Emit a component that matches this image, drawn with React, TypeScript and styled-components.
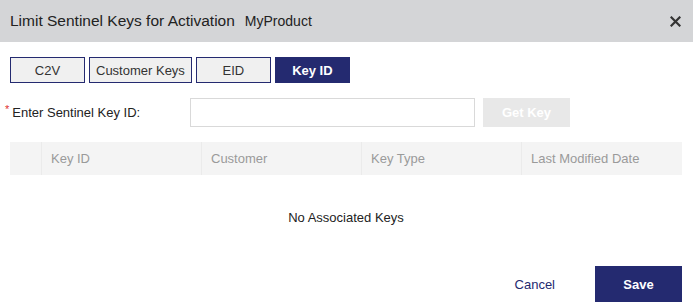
import { useState } from "react";
import styled, { createGlobalStyle } from "styled-components";

const NAVY = "#242a70";

const GlobalStyle = createGlobalStyle`
  html, body {
    margin: 0;
    padding: 0;
    background: #ffffff;
    font-family: "Liberation Sans", Arial, sans-serif;
  }
`;

const TABS = ["C2V", "Customer Keys", "EID", "Key ID"];
const COLUMNS = ["Key ID", "Customer", "Key Type", "Last Modified Date"];

const App = () => {
  const [tab, setTab] = useState("Key ID");
  const [keyId, setKeyId] = useState("");

  return (
    <Dialog>
      <GlobalStyle />
      <Header>
        <Title>Limit Sentinel Keys for Activation</Title>
        <Product>MyProduct</Product>
        <Close aria-label="Close">
          <svg width="11" height="11" viewBox="0 0 11 11">
            <path
              d="M1.5 1.5 L9.5 9.5 M9.5 1.5 L1.5 9.5"
              stroke="#333"
              strokeWidth="2.2"
              strokeLinecap="square"
            />
          </svg>
        </Close>
      </Header>

      <Body>
        <Tabs>
          {TABS.map((t) => (
            <Tab key={t} $active={t === tab} onClick={() => setTab(t)}>
              {t}
            </Tab>
          ))}
        </Tabs>

        <FieldRow>
          <Label>
            <Required>*</Required>Enter Sentinel Key ID:
          </Label>
          <Input value={keyId} onChange={(e) => setKeyId(e.target.value)} />
          <GetKey disabled={!keyId}>Get Key</GetKey>
        </FieldRow>

        <Table>
          <HeadRow>
            <HeadCell $narrow />
            {COLUMNS.map((c) => (
              <HeadCell key={c}>{c}</HeadCell>
            ))}
          </HeadRow>
          <Empty>No Associated Keys</Empty>
        </Table>

        <Footer>
          <Cancel>Cancel</Cancel>
          <Save>Save</Save>
        </Footer>
      </Body>
    </Dialog>
  );
};

const Dialog = styled.div`
  width: 693px;
  height: 307px;
  display: flex;
  flex-direction: column;
  background: #fff;
  overflow: hidden;
`;

const Header = styled.div`
  height: 42px;
  display: flex;
  align-items: center;
  padding: 0 12px 0 10px;
  background: #d4d5d7;
  color: #222;
`;

const Title = styled.div`
  font-size: 15.5px;
  margin-right: 10px;
`;

const Product = styled.div`
  font-size: 14px;
  flex: 1;
`;

const Close = styled.button`
  border: 0;
  background: none;
  padding: 0;
  display: flex;
  cursor: pointer;
`;

const Body = styled.div`
  flex: 1;
  display: flex;
  flex-direction: column;
  padding: 15px 11px 0 10px;
`;

const Tabs = styled.div`
  display: flex;
  gap: 4px;
`;

const Tab = styled.button<{ $active: boolean }>`
  height: 26px;
  padding: 0 6px;
  min-width: 75px;
  box-sizing: border-box;
  border: 1px solid ${NAVY};
  background: ${(p) => (p.$active ? NAVY : "#f0f0f0")};
  color: ${(p) => (p.$active ? "#fff" : "#333")};
  font-family: inherit;
  font-size: 13px;
  font-weight: ${(p) => (p.$active ? 700 : 400)};
  cursor: pointer;
`;

const FieldRow = styled.div`
  display: flex;
  align-items: center;
  margin-top: 15px;
  margin-left: -5px;
`;

const Label = styled.div`
  width: 185px;
  font-size: 13px;
  color: #222;
`;

const Required = styled.span`
  color: #e03030;
  font-size: 11px;
  vertical-align: top;
  position: relative;
  top: -2px;
  margin-right: 3px;
`;

const Input = styled.input`
  width: 285px;
  height: 29px;
  box-sizing: border-box;
  border: 1px solid #d9d9d9;
  outline: none;
  padding: 0 6px;
  font-family: inherit;
  font-size: 13px;
`;

const GetKey = styled.button`
  margin-left: 8px;
  width: 87px;
  height: 29px;
  border: 0;
  background: ${(p) => (p.disabled ? "#e8e8e8" : NAVY)};
  color: #fff;
  font-family: inherit;
  font-size: 13px;
  font-weight: 700;
`;

const Table = styled.div`
  margin-top: 15px;
  display: flex;
  flex-direction: column;
`;

const HeadRow = styled.div`
  display: grid;
  grid-template-columns: 31px 160px 160px 160px 1fr;
  height: 33px;
  background: #f4f4f4;
`;

const HeadCell = styled.div<{ $narrow?: boolean }>`
  display: flex;
  align-items: center;
  padding-left: 9px;
  font-size: 13px;
  color: #9a9a9a;
  border-left: ${(p) => (p.$narrow ? "0" : "1px solid #ebebeb")};
`;

const Empty = styled.div`
  height: 84px;
  display: flex;
  align-items: center;
  justify-content: center;
  font-size: 13px;
  color: #222;
`;

const Footer = styled.div`
  display: flex;
  justify-content: flex-end;
  align-items: center;
  gap: 25px;
  margin-top: 7px;
`;

const Cancel = styled.button`
  border: 0;
  background: none;
  color: ${NAVY};
  font-family: inherit;
  font-size: 13px;
  padding: 0 15px;
  cursor: pointer;
`;

const Save = styled.button`
  width: 87px;
  height: 36px;
  border: 0;
  background: ${NAVY};
  color: #fff;
  font-family: inherit;
  font-size: 13px;
  font-weight: 700;
  cursor: pointer;
`;

export default App;
